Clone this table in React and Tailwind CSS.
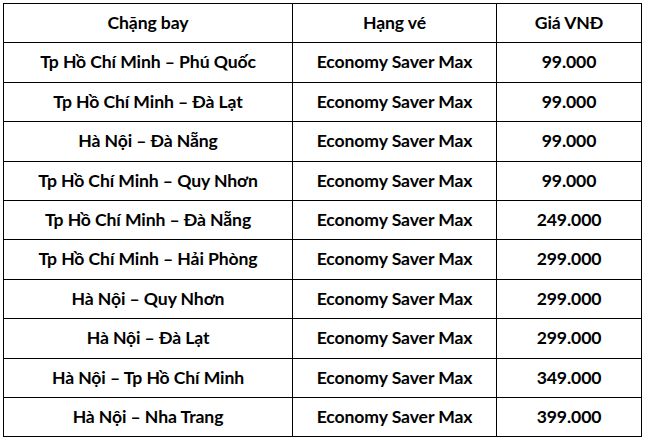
import React from 'react';

const rows = [
    ['Tp Hồ Chí Minh – Phú Quốc', '99.000'],
    ['Tp Hồ Chí Minh – Đà Lạt', '99.000'],
    ['Hà Nội – Đà Nẵng', '99.000'],
    ['Tp Hồ Chí Minh – Quy Nhơn', '99.000'],
    ['Tp Hồ Chí Minh – Đà Nẵng', '249.000'],
    ['Tp Hồ Chí Minh – Hải Phòng', '299.000'],
    ['Hà Nội – Quy Nhơn', '299.000'],
    ['Hà Nội – Đà Lạt', '299.000'],
    ['Hà Nội – Tp Hồ Chí Minh', '349.000'],
    ['Hà Nội – Nha Trang', '399.000'],
];

const cell = 'border-[1.5px] border-black text-center align-middle p-0';

const App = () => {
    return (
        <div className="w-[648px] h-[442px] bg-white pt-[3px] pl-[3px]" style={{ fontFamily: 'Lato, "Open Sans", sans-serif' }}>
            <table className="border-collapse text-black font-bold text-[17.6px] tracking-[-0.1px]">
                <colgroup>
                    <col className="w-[289px]" />
                    <col className="w-[204px]" />
                    <col className="w-[145px]" />
                </colgroup>
                <thead>
                    <tr className="h-[39.4px]">
                        <th className={cell}>Chặng bay</th>
                        <th className={cell}>Hạng vé</th>
                        <th className={cell}>Giá VNĐ</th>
                    </tr>
                </thead>
                <tbody>
                    {rows.map((r, i) => (
                        <tr key={i} className="h-[39.4px]">
                            <td className={cell}>{r[0]}</td>
                            <td className={cell}>Economy Saver Max</td>
                            <td className={cell}>{r[1]}</td>
                        </tr>
                    ))}
                </tbody>
            </table>
        </div>
    );
};

export default App;
